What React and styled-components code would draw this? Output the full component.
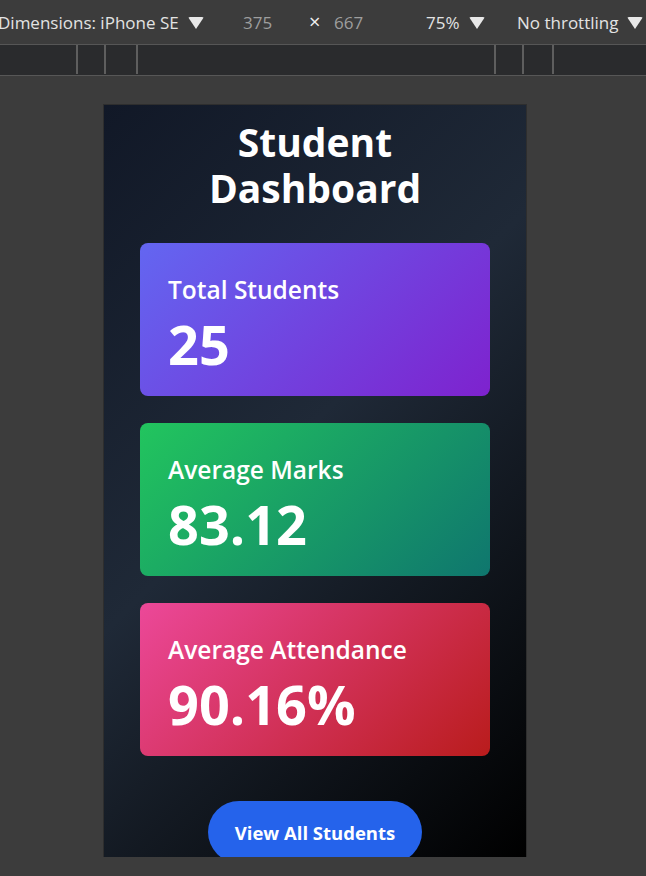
import styled, { createGlobalStyle } from "styled-components";

const GlobalStyle = createGlobalStyle`
  html, body {
    margin: 0;
    padding: 0;
    background: #3c3c3c;
    font-family: "Open Sans", "Noto Sans", sans-serif;
  }
  * {
    box-sizing: border-box;
  }
`;

const stats = [
  { label: "Total Students", value: "25", from: "#6366f1", to: "#7e22ce" },
  { label: "Average Marks", value: "83.12", from: "#22c55e", to: "#0f766e" },
  { label: "Average Attendance", value: "90.16%", from: "#ec4899", to: "#b91c1c" },
];

const App = () => {
  return (
    <>
      <GlobalStyle />
      <Toolbar>
        <ToolItem $w={245}>
          Dimensions: iPhone SE <Caret />
        </ToolItem>
        <Num $w={66}>375</Num>
        <Times $w={25}>×</Times>
        <Num $w={92}>667</Num>
        <ToolItem $w={91}>
          75% <Caret />
        </ToolItem>
        <ToolItem>
          No throttling <Caret />
        </ToolItem>
      </Toolbar>
      <Ruler>
        <Seg $w={77} />
        <Seg $w={28} $line />
        <Seg $w={32} $line />
        <Seg $w={358} $line />
        <Seg $w={28} $line />
        <Seg $w={30} $line />
        <Seg $line $grow />
      </Ruler>
      <Stage>
        <Device>
          <Title>Student Dashboard</Title>
          <Cards>
            {stats.map((s) => (
              <Card key={s.label} $from={s.from} $to={s.to}>
                <Label>{s.label}</Label>
                <Value>{s.value}</Value>
              </Card>
            ))}
          </Cards>
          <ButtonRow>
            <ViewButton>View All Students</ViewButton>
          </ButtonRow>
        </Device>
      </Stage>
    </>
  );
};

const Toolbar = styled.div`
  height: 45px;
  display: flex;
  align-items: center;
  margin-left: -2px;
  border-bottom: 1px solid #565656;
  font-size: 17px;
  color: #e3e3e3;
  white-space: nowrap;
  overflow: hidden;
`;
const ToolItem = styled.div`
  display: flex;
  align-items: center;
  gap: 9px;
  flex: 0 0 ${(p) => (p.$w ? `${p.$w}px` : "auto")};
`;
const Num = styled.div`
  flex: 0 0 ${(p) => p.$w}px;
  color: #9e9e9e;
`;
const Times = styled.div`
  flex: 0 0 ${(p) => p.$w}px;
  color: #f0f0f0;
  font-size: 20px;
  line-height: 1;
`;
const Caret = styled.span`
  width: 0;
  height: 0;
  margin-top: 2px;
  border-left: 8px solid transparent;
  border-right: 8px solid transparent;
  border-top: 12px solid #e8e8e8;
  border-radius: 2px;
`;

const Ruler = styled.div`
  height: 31px;
  display: flex;
  background: #2a2b2d;
  border-bottom: 1px solid #575757;
`;
const Seg = styled.div`
  height: 29px;
  flex: ${(p) => (p.$grow ? "1" : `0 0 ${p.$w}px`)};
  border-left: ${(p) => (p.$line ? "2px solid #5e5e5e" : "none")};
  margin-left: ${(p) => (p.$w === 77 ? "-1px" : "0")};
`;

const Stage = styled.div`
  padding: 29px 0 0 104px;
`;
const Device = styled.div`
  width: 422px;
  height: 752px;
  overflow: hidden;
  padding-top: 14px;
  background: linear-gradient(135deg, #111827 0%, #1f2937 45%, #000000 100%);
  box-shadow: 0 0 0 1px #2e2e2e;
`;
const Title = styled.h1`
  margin: 0 auto;
  width: 280px;
  text-align: center;
  color: #ffffff;
  font-size: 39px;
  line-height: 46px;
  font-weight: 700;
`;
const Cards = styled.div`
  display: flex;
  flex-direction: column;
  gap: 27px;
  padding: 32px 36px 0;
`;
const Card = styled.div`
  height: 153px;
  border-radius: 8px;
  padding: 31px 28px;
  color: #ffffff;
  background: linear-gradient(135deg, ${(p) => p.$from}, ${(p) => p.$to});
`;
const Label = styled.div`
  font-size: 24.5px;
  line-height: 32px;
  font-weight: 600;
`;
const Value = styled.div`
  margin-top: 6px;
  font-size: 54px;
  line-height: 64px;
  font-weight: 700;
`;
const ButtonRow = styled.div`
  display: flex;
  justify-content: center;
  padding-top: 45px;
`;
const ViewButton = styled.button`
  width: 214px;
  height: 62px;
  border: none;
  border-radius: 31px;
  background: #2563eb;
  color: #ffffff;
  font-family: inherit;
  font-size: 18.5px;
  font-weight: 700;
`;

export default App;
